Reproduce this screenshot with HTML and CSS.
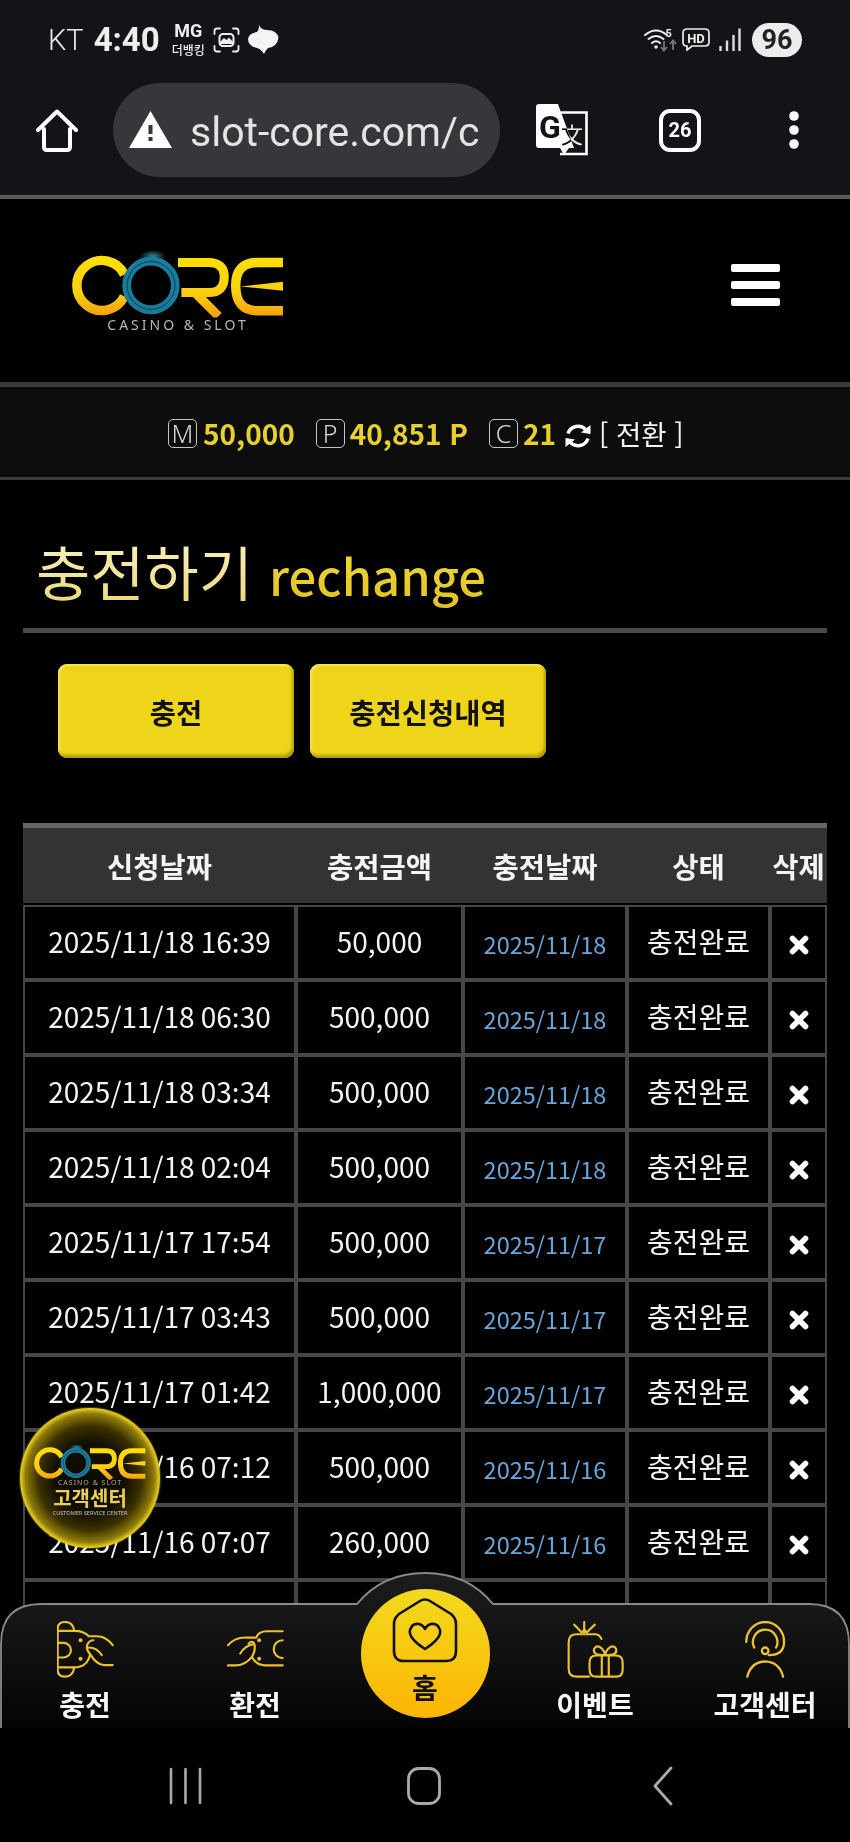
FILE: index.html
```html
<!DOCTYPE html>
<html lang="ko">
<head>
<meta charset="utf-8">
<title>충전하기 rechange</title>
<link rel="stylesheet" href="styles.css">
</head>
<body>
<svg class="defs" width="0" height="0" aria-hidden="true">
  <defs>
    <linearGradient id="gold" gradientUnits="userSpaceOnUse" x1="0" y1="78" x2="0" y2="255">
      <stop offset="0" stop-color="#ffe000"/>
      <stop offset="0.6" stop-color="#fdd010"/>
      <stop offset="1" stop-color="#f4a10c"/>
    </linearGradient>
    <radialGradient id="halo">
      <stop offset="0" stop-color="#3fa6c8" stop-opacity=".8"/>
      <stop offset="1" stop-color="#3fa6c8" stop-opacity="0"/>
    </radialGradient>
    <linearGradient id="navfill" x1="0" y1="0" x2="0" y2="1">
      <stop offset="0" stop-color="#1d1d1d"/>
      <stop offset="1" stop-color="#040404"/>
    </linearGradient>
    <symbol id="core" viewBox="95 60 640 200">
      <ellipse cx="340" cy="78" rx="40" ry="18" fill="url(#halo)"/>
      <path d="M256 133 A74 74 0 1 0 256 197" fill="none" stroke="url(#gold)" stroke-width="28"/>
      <path d="M415 97 H505 Q552 97 552 140 Q552 186 505 186 H425 M465 186 L535 256" fill="none" stroke="url(#gold)" stroke-width="27"/>
      <path d="M726 97 H650 Q586 97 586 165 Q586 240 650 240 H726" fill="none" stroke="url(#gold)" stroke-width="28"/>
      <path d="M600 168 L726 154 V181 Z" fill="url(#gold)"/>
      <circle cx="335" cy="165" r="72" fill="none" stroke="#1a7c9c" stroke-width="26"/>
      <circle cx="335" cy="165" r="71" fill="none" stroke="#06222c" stroke-width="2"/>
    </symbol>
    <symbol id="xmark" viewBox="0 0 20 20">
      <path d="M3.5 3.5 L16.5 16.5 M16.5 3.5 L3.5 16.5" fill="none" stroke="#fff" stroke-width="5.6" stroke-linecap="round"/>
    </symbol>
  </defs>
</svg>

<div class="phone">
  <header class="chrome">
    <div class="status">
      <span class="carrier">KT</span>
      <span class="clock">4:40</span>
      <span class="mg"><b>MG</b><i>더뱅킹</i></span>
      <svg class="ic-shot" viewBox="0 0 27 26"><path d="M1.5 7 V4 Q1.5 1.5 4 1.5 H7 M20 1.5 H23 Q25.5 1.5 25.5 4 V7 M25.5 19 V22 Q25.5 24.5 23 24.5 H20 M7 24.5 H4 Q1.5 24.5 1.5 22 V19" fill="none" stroke="#eee" stroke-width="1.8" stroke-linecap="round"/><rect x="6.5" y="7" width="14" height="12" rx="3.5" fill="none" stroke="#eee" stroke-width="2"/><path d="M7 15 L11 11 L13.5 13 L16 10.5 L20 15 V17 H7 Z" fill="#eee"/></svg>
      <svg class="ic-blob" viewBox="0 0 31 29"><path d="M11 0 Q13 5 19 5 Q29 5 30.500 13 Q29 22 20 23 Q18 25 16 29 Q13 24 9 23 Q0 21 0 14 Q1 8 9 7 Q11 5 11 0 Z" fill="#f4f4f4"/></svg>
      <span class="status-gap"></span>
      <svg class="ic-wifi" viewBox="0 0 33 25"><path d="M1 8 Q12 -1 23 8 M4.5 12 Q12 6 19.5 12 M8 16 Q12 12.5 16 16" fill="none" stroke="#eee" stroke-width="2" stroke-linecap="round"/><circle cx="12" cy="20" r="1.8" fill="#eee"/><text x="21.5" y="10" class="wifi-five">5</text><path d="M20 14 V23 M17 20 L20 23.5 L23 20 M29 23 V14 M26 17 L29 13.5 L32 17" fill="none" stroke="#777" stroke-width="1.8"/></svg>
      <svg class="ic-hd" viewBox="0 0 28 23"><path d="M5 1 H23 Q27 1 27 5 V14 Q27 18 23 18 H10 L5 22 V18 Q1 18 1 14 V5 Q1 1 5 1 Z" fill="none" stroke="#eee" stroke-width="1.7"/><text x="14" y="14.5" class="hd-text">HD</text></svg>
      <svg class="ic-signal" viewBox="0 0 22 23"><path d="M1.5 23 V18 M8 23 V12.5 M14.5 23 V7 M20.5 23 V0.5" fill="none" stroke="#ddd" stroke-width="2.4"/></svg>
      <span class="battery">96</span>
    </div>
    <div class="urlbar">
      <svg class="ic-home" viewBox="0 0 42 43"><path d="M8 20 V38 Q8 41 11 41 H31 Q34 41 34 38 V20 M2 21 L21 2.5 L40 21" fill="none" stroke="#fff" stroke-width="4" stroke-linecap="round" stroke-linejoin="round"/></svg>
      <div class="pill">
        <svg class="ic-warn" viewBox="0 0 43 37"><path d="M21.5 0 L43 37 H0 Z" fill="#fff"/><rect x="19.5" y="14" width="4" height="9" fill="#36373b"/><rect x="19.5" y="26" width="4" height="4" fill="#36373b"/></svg>
        <span class="url">slot-core.com/c</span>
      </div>
      <svg class="ic-translate" viewBox="0 0 52 52"><path d="M25 8.5 H50.5 V50 H24" fill="#131417" stroke="#fff" stroke-width="2.6"/><path d="M3 0 H22 L38 44 H3 Q0 44 0 41 V3 Q0 0 3 0 Z" fill="#fff"/><path d="M24 44 H33 L28 51 Z" fill="#fff"/><text x="14" y="34" class="tr-g">G</text><text x="36" y="39" class="tr-wen">文</text></svg>
      <div class="tabs">26</div>
      <svg class="ic-dots" viewBox="0 0 10 38"><circle cx="5" cy="5" r="4.8" fill="#fff"/><circle cx="5" cy="19" r="4.8" fill="#fff"/><circle cx="5" cy="33" r="4.8" fill="#fff"/></svg>
    </div>
  </header>

  <main class="page">
    <div class="topbar">
      <div class="logo">
        <svg class="logo-mark" viewBox="0 0 640 200"><use href="#core" width="640" height="200"/></svg>
        <span class="logo-sub">CASINO &amp; SLOT</span>
      </div>
      <div class="burger"><span></span><span></span><span></span></div>
    </div>

    <div class="money">
      <span class="tag">M</span><span class="amount a1">50,000</span>
      <span class="tag">P</span><span class="amount a2">40,851 P</span>
      <span class="tag">C</span><span class="amount a3">21</span>
      <svg class="ic-refresh" viewBox="0 0 26 26"><path d="M3 10.5 A10.5 10.5 0 0 1 21 7 M23 15.5 A10.5 10.5 0 0 1 5 19" fill="none" stroke="#fff" stroke-width="3.4"/><path d="M16 9.5 L25.5 11 V2 Z M10 16.5 L0.5 15 V24 Z" fill="#fff"/></svg>
      <span class="swap">[ 전환 ]</span>
    </div>

    <h1 class="title"><span class="t-ko">충전하기</span> <span class="t-en">rechange</span></h1>

    <div class="actions">
      <a class="btn">충전</a>
      <a class="btn">충전신청내역</a>
    </div>

    <table class="history">
      <colgroup><col class="c1"><col class="c2"><col class="c3"><col class="c4"><col class="c5"></colgroup>
      <thead><tr><th>신청날짜</th><th>충전금액</th><th>충전날짜</th><th>상태</th><th>삭제</th></tr></thead>
      <tbody>
        <tr><td>2025/11/18 16:39</td><td>50,000</td><td class="date">2025/11/18</td><td>충전완료</td><td><svg class="x"><use href="#xmark"/></svg></td></tr>
        <tr><td>2025/11/18 06:30</td><td>500,000</td><td class="date">2025/11/18</td><td>충전완료</td><td><svg class="x"><use href="#xmark"/></svg></td></tr>
        <tr><td>2025/11/18 03:34</td><td>500,000</td><td class="date">2025/11/18</td><td>충전완료</td><td><svg class="x"><use href="#xmark"/></svg></td></tr>
        <tr><td>2025/11/18 02:04</td><td>500,000</td><td class="date">2025/11/18</td><td>충전완료</td><td><svg class="x"><use href="#xmark"/></svg></td></tr>
        <tr><td>2025/11/17 17:54</td><td>500,000</td><td class="date">2025/11/17</td><td>충전완료</td><td><svg class="x"><use href="#xmark"/></svg></td></tr>
        <tr><td>2025/11/17 03:43</td><td>500,000</td><td class="date">2025/11/17</td><td>충전완료</td><td><svg class="x"><use href="#xmark"/></svg></td></tr>
        <tr><td>2025/11/17 01:42</td><td>1,000,000</td><td class="date">2025/11/17</td><td>충전완료</td><td><svg class="x"><use href="#xmark"/></svg></td></tr>
        <tr><td>2025/11/16 07:12</td><td>500,000</td><td class="date">2025/11/16</td><td>충전완료</td><td><svg class="x"><use href="#xmark"/></svg></td></tr>
        <tr><td>2025/11/16 07:07</td><td>260,000</td><td class="date">2025/11/16</td><td>충전완료</td><td><svg class="x"><use href="#xmark"/></svg></td></tr>
        <tr><td></td><td></td><td></td><td></td><td></td></tr>
      </tbody>
    </table>

    <div class="badge">
      <svg class="badge-logo" viewBox="0 0 640 200"><use href="#core" width="640" height="200"/></svg>
      <span class="badge-sub">CASINO &amp; SLOT</span>
      <span class="badge-ko">고객센터</span>
      <span class="badge-en">CUSTOMER SERVICE CENTER</span>
    </div>

    <nav class="tabbar">
      <svg class="tabbar-bg" viewBox="0 0 850 156"><path d="M1 156 V72 Q1 32 41 32 H357 C375 10 400 1 425 1 C450 1 475 10 493 32 H809 Q849 32 849 72 V156" fill="url(#navfill)" stroke="#8a8a80" stroke-width="1.8"/></svg>
      <div class="tabs-row">
        <a class="tab">
          <svg class="tab-ic" viewBox="170 183 172 170"><g fill="none" stroke="#ecc22c" stroke-width="6.500" stroke-linecap="round" stroke-linejoin="round"><path d="M172 212 V206 Q172 185 195 185 Q218 185 222 212 M172 205 V330 Q172 350 195 350 Q218 350 222 322 M172 212 H224 Q250 212 266 228 H290 Q318 228 338 255 M172 322 H222 Q262 322 270 282 Q256 268 262 252 Q268 240 280 240 M270 282 Q290 315 312 315 H338 M266 262 Q290 262 305 285 M172 248 H190 A22 22 0 0 1 190 292 H172"/></g><circle cx="241" cy="240" r="6" fill="#ecc22c"/><circle cx="241" cy="296" r="6" fill="#ecc22c"/></svg>
          <span class="tab-label">충전</span>
        </a>
        <a class="tab">
          <svg class="tab-ic" viewBox="680 183 172 170"><g fill="none" stroke="#ecc22c" stroke-width="6.500" stroke-linecap="round" stroke-linejoin="round"><path d="M848 213 H800 Q775 213 768 232 H740 Q705 230 683 255 M848 316 H795 Q768 316 755 290 Q735 316 705 316 H683 M755 290 Q768 270 762 250 Q756 240 745 250 M720 280 Q735 255 760 252 M848 240 A27 27 0 1 0 848 294"/></g><circle cx="777" cy="240" r="6" fill="#ecc22c"/><circle cx="777" cy="296" r="6" fill="#ecc22c"/></svg>
          <span class="tab-label">환전</span>
        </a>
        <a class="tab tab-home">
          <span class="home-disc">
            <svg class="home-ic" viewBox="0 0 66 65"><path d="M2 26 Q2 20 7 16 L28 3 Q33 0 38 3 L59 16 Q64 20 64 26 V53 Q64 63 54 63 H12 Q2 63 2 53 Z" fill="none" stroke="#111" stroke-width="2.6"/><path d="M33 51 Q16 40 18 32 Q20 25 27 26 Q31 27 33 31 Q35 27 39 26 Q46 25 48 32 Q50 40 33 51 Z" fill="none" stroke="#111" stroke-width="2.6" stroke-linejoin="round"/></svg>
            <span class="home-label">홈</span>
          </span>
        </a>
        <a class="tab">
          <svg class="tab-ic" viewBox="710 183 172 170"><g fill="none" stroke="#ecc22c" stroke-width="6.500" stroke-linecap="round" stroke-linejoin="round"><path d="M814 236 Q808 222 794 222 H738 Q715 222 715 246 V326 Q715 350 740 350 H776 M778 308 Q778 286 798 286 H858 Q878 286 878 308 V328 Q878 350 858 350 H798 Q778 350 778 328 Z M815 286 V350 M836 286 V350 M825 285 Q785 285 792 266 Q800 252 815 265 Q825 275 825 285 Q825 275 835 265 Q850 252 858 266 Q865 285 825 285"/><path d="M762 185 V214 M732 193 L754 216 M794 193 L770 216"/></g><path d="M750 218 L762 203 L775 218 Z" fill="#ecc22c"/></svg>
          <span class="tab-label">이벤트</span>
        </a>
        <a class="tab">
          <svg class="tab-ic" viewBox="1220 183 172 170"><g fill="none" stroke="#ecc22c" stroke-width="7" stroke-linecap="round" stroke-linejoin="round"><path d="M1248 245 A57 60 0 0 1 1362 245 Q1362 284 1316 285 M1272 262 A37 37 0 1 1 1338 262"/><circle cx="1305" cy="272" r="10"/><path d="M1251 350 Q1262 306 1305 304 Q1348 306 1359 350"/></g></svg>
          <span class="tab-label">고객센터</span>
        </a>
      </div>
    </nav>
  </main>

  <footer class="sysnav">
    <svg class="sys-recents" viewBox="0 0 33 38"><path d="M2 2 V36 M16.500 2 V36 M31 2 V36" fill="none" stroke="#aaa" stroke-width="2.6" stroke-linecap="round"/></svg>
    <svg class="sys-home" viewBox="0 0 34 38"><rect x="1.500" y="1.500" width="31" height="35" rx="10" fill="none" stroke="#aaa" stroke-width="2.800"/></svg>
    <svg class="sys-back" viewBox="0 0 20 40"><path d="M18 2 L2 20 L18 38" fill="none" stroke="#aaa" stroke-width="2.800" stroke-linecap="round" stroke-linejoin="round"/></svg>
  </footer>
</div>
</body>
</html>
```
FILE: styles.css
```css
* { box-sizing: border-box; }
html, body { margin: 0; padding: 0; background: #000; }
body { font-family: "Noto Sans CJK KR", "Noto Sans", sans-serif; color: #fff; }
.defs { position: absolute; }
.phone { width: 850px; height: 1842px; display: flex; flex-direction: column; overflow: hidden; }

/* browser chrome */
.chrome { height: 199px; background: #131417; border-bottom: 4px solid #5a5a5a; flex: none; font-family: Roboto, sans-serif; }
.status { height: 83px; display: flex; align-items: center; padding: 0 48px 4px 48px; }
.carrier { font-size: 29px; color: #e8e8e8; font-weight: 300; }
.clock { font-size: 33px; font-weight: 700; color: #eee; margin-left: 10px; }
.mg { display: flex; flex-direction: column; align-items: center; margin-left: 12px; line-height: 1; color: #eee; }
.mg b { font-size: 18px; font-weight: 700; }
.mg i { font: 500 12px "Noto Sans CJK KR", sans-serif; margin-top: 1px; }
.ic-shot { width: 27px; height: 26px; margin-left: 8px; }
.ic-blob { width: 31px; height: 29px; margin-left: 8px; }
.status-gap { flex: 1; }
.ic-wifi { width: 33px; height: 25px; }
.wifi-five { font: 700 11px Roboto, sans-serif; fill: #eee; }
.ic-hd { width: 28px; height: 23px; margin-left: 5px; }
.hd-text { font: 700 13px Roboto, sans-serif; fill: #eee; text-anchor: middle; }
.ic-signal { width: 22px; height: 23px; margin-left: 9px; }
.battery { width: 50px; height: 34px; border-radius: 17px; background: #ececec; color: #222; font-size: 27px; font-weight: 700; line-height: 34px; text-align: center; margin-left: 11px; }
.urlbar { display: flex; align-items: center; padding-left: 36px; }
.ic-home { width: 42px; height: 43px; flex: none; }
.pill { width: 387px; height: 94px; margin-left: 35px; border-radius: 47px; background: #36373b; display: flex; align-items: center; padding-left: 16px; flex: none; overflow: hidden; }
.ic-warn { width: 43px; height: 37px; flex: none; margin-bottom: 2px; }
.url { font-size: 41px; color: #e4e4e4; margin-left: 18px; padding-top: 4px; white-space: nowrap; }
.ic-translate { width: 52px; height: 52px; margin-left: 36px; flex: none; }
.tr-g { font: 700 32px Roboto, sans-serif; fill: #131417; text-anchor: middle; }
.tr-wen { font: 400 22px "Noto Sans CJK SC", sans-serif; fill: #fff; text-anchor: middle; mix-blend-mode: difference; }
.tabs { width: 42px; height: 43px; margin-left: 71px; border: 4px solid #fff; border-radius: 11px; font-size: 20px; font-weight: 700; line-height: 35px; text-align: center; color: #fff; flex: none; }
.ic-dots { width: 10px; height: 38px; margin-left: 88px; flex: none; }

/* page */
.page { position: relative; flex: 1; overflow: hidden; background: #000; }
.topbar { height: 183px; display: flex; align-items: flex-start; justify-content: space-between; padding: 51px 70px 0 70px; }
.logo { display: flex; flex-direction: column; align-items: center; width: 216px; }
.logo-mark { width: 216px; height: 67.5px; }
.logo-sub { font: 400 14px "Noto Sans", sans-serif; letter-spacing: 3px; color: #b8b8b8; line-height: 16px; margin-top: -1px; white-space: nowrap; }
.burger { display: flex; flex-direction: column; gap: 9px; margin-top: 14px; }
.burger span { display: block; width: 49px; height: 8px; border-radius: 2px; background: #fff; }

.money { height: 98px; background: #0d0d0d; border-top: 5px solid #3a3a3a; border-bottom: 3px solid #3a3a3a; display: flex; align-items: center; padding-left: 168px; padding-top: 2px; }
.tag { width: 29px; height: 29px; border: 1.500px solid #c4c4c4; border-radius: 5px; font: 300 25px/26px "Noto Sans", sans-serif; color: #d8d8d8; text-align: center; flex: none; }
.amount { font-size: 28px; font-weight: 700; color: #e8d02c; margin-left: 6px; line-height: 36px; white-space: nowrap; }
.a1 { margin-right: 21px; }
.a2 { margin-left: 5px; margin-right: 21px; }
.a3 { margin-left: 5px; margin-right: 9px; }
.ic-refresh { width: 26px; height: 26px; flex: none; margin-top: 6px; }
.swap { font-size: 27.500px; font-weight: 400; margin-left: 8px; color: #f4f4f4; white-space: pre; }

.title { margin: 0 23px; height: 153px; padding-left: 13px; padding-top: 56px; border-bottom: 5px solid #4a4a4a; font-weight: 400; line-height: 70px; white-space: nowrap; }
.t-ko { font-size: 59px; background: linear-gradient(#fcf6cc, #e9d66e); -webkit-background-clip: text; background-clip: text; color: transparent; }
.t-en { font-size: 49px; font-weight: 500; margin-left: 7px; background: linear-gradient(#f2de3c, #dfc022); -webkit-background-clip: text; background-clip: text; color: transparent; }
.actions { display: flex; gap: 16px; padding: 31px 0 0 58px; }
.btn { width: 236px; height: 94px; border-radius: 9px; background: #efd519; box-shadow: inset -2px -3px 3px #b39a12, inset 2px 2px 2px #f6e35a; color: #111; font-size: 28.500px; font-weight: 700; display: flex; align-items: center; justify-content: center; }

.history { margin: 65px 0 0 23px; width: 804px; table-layout: fixed; border-collapse: separate; border-spacing: 0; }
.c1 { width: 273px; } .c2 { width: 167px; } .c3 { width: 164px; } .c4 { width: 143px; } .c5 { width: 57px; }
.history th { height: 82px; background: #333; border-top: 5px solid #666; border-bottom: 2px solid #000; font-size: 28.500px; font-weight: 700; color: #f4f4f4; padding: 0; white-space: nowrap; }
.history td { height: 75px; border: 2px solid #474747; font-size: 28px; font-weight: 400; text-align: center; padding: 0 0 3px; color: #f4f4f4; white-space: nowrap; font-feature-settings: "calt" 0, "ccmp" 0, "locl" 0, "rclt" 0, "rlig" 0, "kern" 0, "liga" 0, "clig" 0; text-rendering: optimizeSpeed; }
.history td.date { font-size: 23.500px; color: #68a6d8; padding: 3px 0 0; }
.x { width: 20px; height: 20px; display: block; margin: 8px auto 0; }

/* floating */
.badge { position: absolute; left: 20px; top: 1209px; width: 140px; height: 140px; border-radius: 50%; display: flex; flex-direction: column; align-items: center; padding-top: 36px; background: radial-gradient(circle closest-side at 50% 50%, #0c0900 0, #120e00 50%, #3a3000 74%, #8f7b0a 92%, #f0d620 100%); box-shadow: 0 0 2px #e6ca1c; }
.badge-logo { width: 114px; height: 36px; flex: none; }
.badge-sub { font: 400 7px/9px "Noto Sans", sans-serif; letter-spacing: 1px; color: #aaa; margin-top: -2px; }
.badge-ko { font-size: 20px; font-weight: 700; line-height: 22px; color: #e8cf50; white-space: nowrap; }
.badge-en { font: 400 5.600px/9px "Noto Sans", sans-serif; color: #ccc; white-space: nowrap; }

.tabbar { position: absolute; left: 0; right: 0; bottom: 0; height: 156px; }
.tabbar-bg { position: absolute; left: 0; top: 0; width: 850px; height: 156px; }
.tabs-row { position: relative; display: flex; padding-top: 17px; }
.tab { flex: 1; display: flex; flex-direction: column; align-items: center; padding-top: 32px; }
.tab-ic { width: 57px; height: 57px; flex: none; }
.tab-label { font-size: 28px; font-weight: 700; line-height: 34px; margin-top: 9px; white-space: nowrap; color: #f6f6f6; }
.tab-home { padding-top: 0; }
.home-disc { width: 129px; height: 129px; border-radius: 50%; background: linear-gradient(#f2da1e, #fdb504); display: flex; flex-direction: column; align-items: center; padding-top: 9px; }
.home-ic { width: 66px; height: 65px; flex: none; }
.home-label { font-size: 28px; font-weight: 700; color: #111; line-height: 34px; margin-top: 7px; }

.sysnav { height: 114px; flex: none; background: #000; display: flex; align-items: center; padding: 2px 0 0 169px; }
.sys-recents { width: 33px; height: 38px; }
.sys-home { width: 34px; height: 38px; margin-left: 205px; }
.sys-back { width: 20px; height: 40px; margin-left: 212px; }
```
